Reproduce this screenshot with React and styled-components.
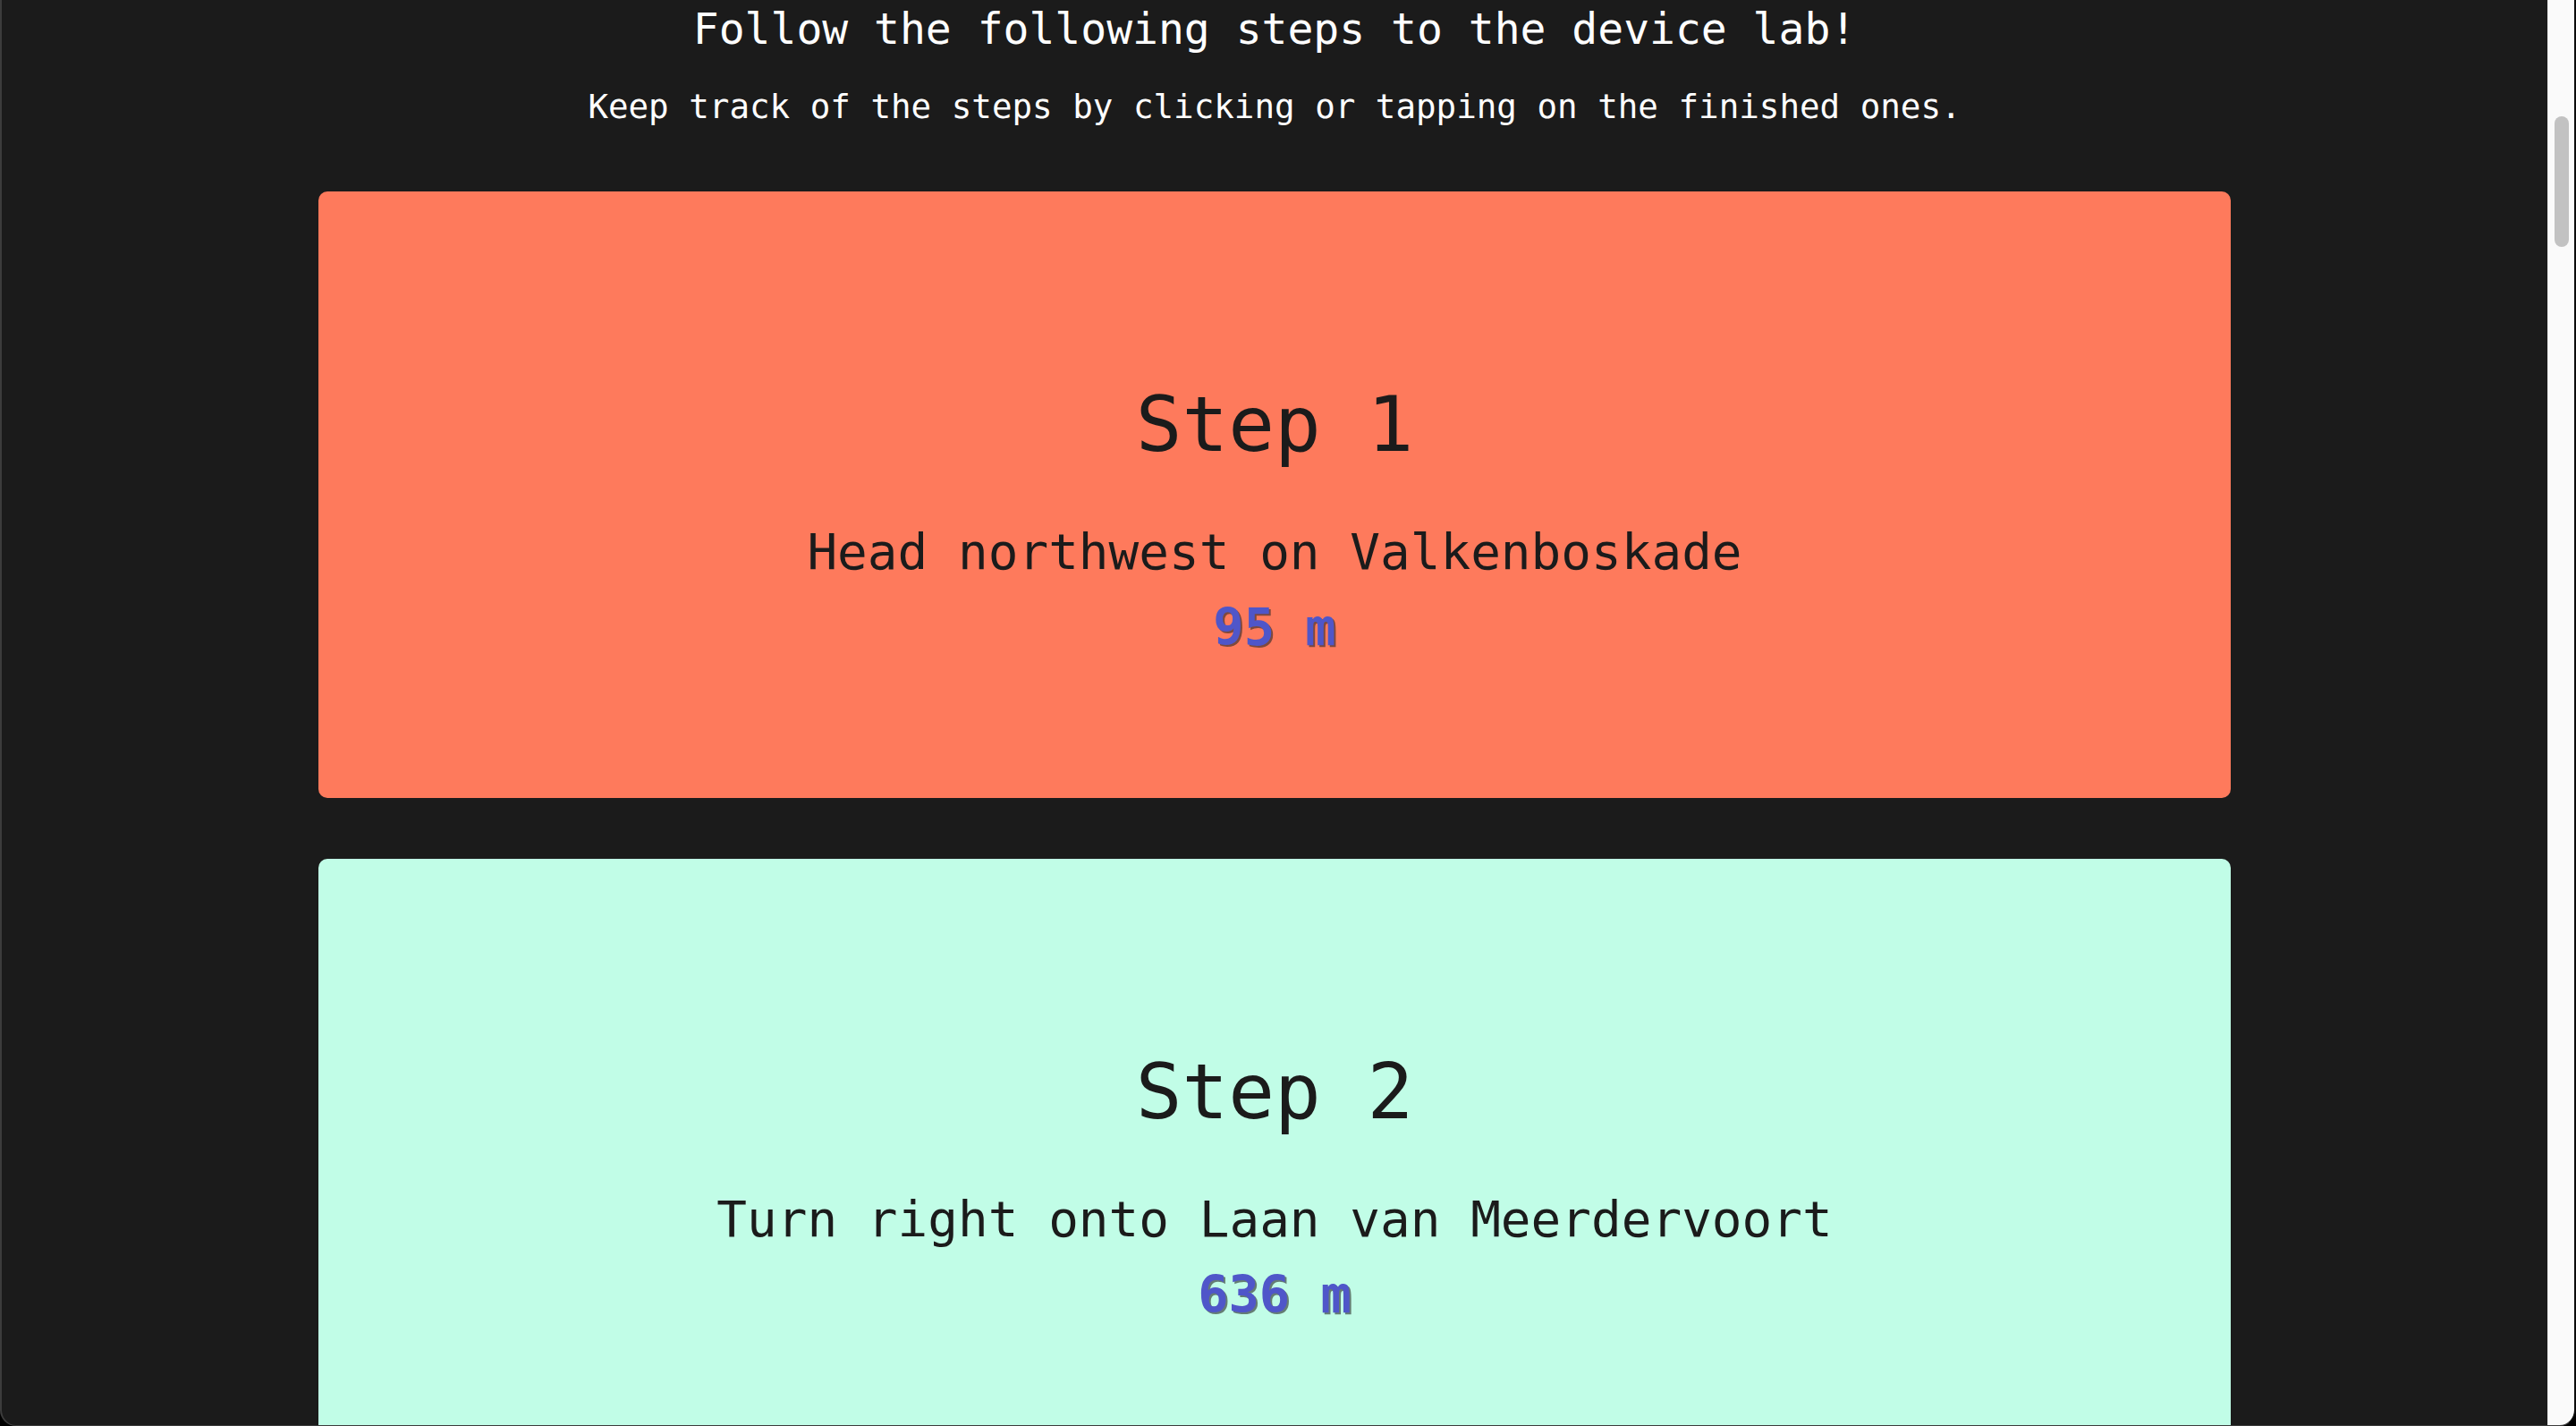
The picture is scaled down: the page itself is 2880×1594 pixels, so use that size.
import React, { useState } from "react";
import styled, { createGlobalStyle } from "styled-components";

const colors = {
  page: "#1b1b1b",
  text: "#1b1b1b",
  coral: "#fe7a5c",
  mint: "#c1fde7",
  distance: "#4f56c9",
};

const GlobalStyle = createGlobalStyle`
  html, body {
    margin: 0;
    padding: 0;
    background: #000;
    overflow: hidden;
  }
  * {
    box-sizing: border-box;
  }
`;

const Frame = styled.div`
  width: 2880px;
  height: 1594px;
  display: flex;
  background-color: ${colors.page};
  border-left: 2px solid #3c3c3c;
  border-right: 2px solid #0c0c0c;
  border-bottom: 1px solid #3c3c3c;
  border-radius: 0 0 18px 18px;
  overflow: hidden;
  font-family: "DejaVu Sans Mono", "Liberation Mono", monospace;
`;

const Main = styled.main`
  flex: 1;
  overflow: hidden;
  display: flex;
  flex-direction: column;
  align-items: center;
`;

const Title = styled.h2`
  margin: 4px 0 0;
  color: white;
  font-size: 48px;
  font-weight: 500;
  line-height: 56px;
  text-align: center;
`;

const Subtitle = styled.p`
  margin: 37px 0 0;
  color: white;
  font-size: 37.5px;
  line-height: 44px;
  text-align: center;
`;

const StepList = styled.ul`
  list-style: none;
  margin: 73px 0 0;
  padding: 0;
  width: 2138px;
  display: flex;
  flex-direction: column;
  gap: 68px;
`;

const StepCard = styled.li`
  height: 678px;
  border-radius: 10px;
  padding-top: 210px;
  background-color: ${(p) => (p.$done ? colors.mint : colors.coral)};
  color: ${colors.text};
  text-align: center;
  cursor: pointer;
`;

const StepTitle = styled.h3`
  margin: 0;
  font-size: 86px;
  font-weight: 500;
  line-height: 100px;
`;

const Instruction = styled.p`
  margin: 61px 0 0;
  font-size: 56px;
  line-height: 64px;
`;

const Distance = styled.p`
  margin: 20px 0 0;
  font-size: 57px;
  font-weight: 700;
  line-height: 64px;
  color: ${colors.distance};
  text-shadow: 2px 2px 0 rgba(40, 40, 40, 0.6);
`;

const ScrollTrack = styled.div`
  width: 30px;
  flex-shrink: 0;
  background-color: #fafafa;
  border-left: 1px solid #e6e6e6;
  padding: 130px 6px 0 7px;
`;

const ScrollThumb = styled.div`
  height: 146px;
  border-radius: 8px;
  background-color: #c2c2c2;
`;

const steps = [
  { id: 1, text: "Head northwest on Valkenboskade", distance: "95 m", done: false },
  { id: 2, text: "Turn right onto Laan van Meerdervoort", distance: "636 m", done: true },
];

const App = () => {
  const [items, setItems] = useState(steps);

  const toggle = (id) =>
    setItems((prev) => prev.map((s) => (s.id === id ? { ...s, done: !s.done } : s)));

  return (
    <>
      <GlobalStyle />
      <Frame>
        <Main>
          <Title>Follow the following steps to the device lab!</Title>
          <Subtitle>Keep track of the steps by clicking or tapping on the finished ones.</Subtitle>
          <StepList>
            {items.map((s) => (
              <StepCard key={s.id} $done={s.done} onClick={() => toggle(s.id)}>
                <StepTitle>Step {s.id}</StepTitle>
                <Instruction>{s.text}</Instruction>
                <Distance>{s.distance}</Distance>
              </StepCard>
            ))}
          </StepList>
        </Main>
        <ScrollTrack>
          <ScrollThumb />
        </ScrollTrack>
      </Frame>
    </>
  );
};

export default App;
